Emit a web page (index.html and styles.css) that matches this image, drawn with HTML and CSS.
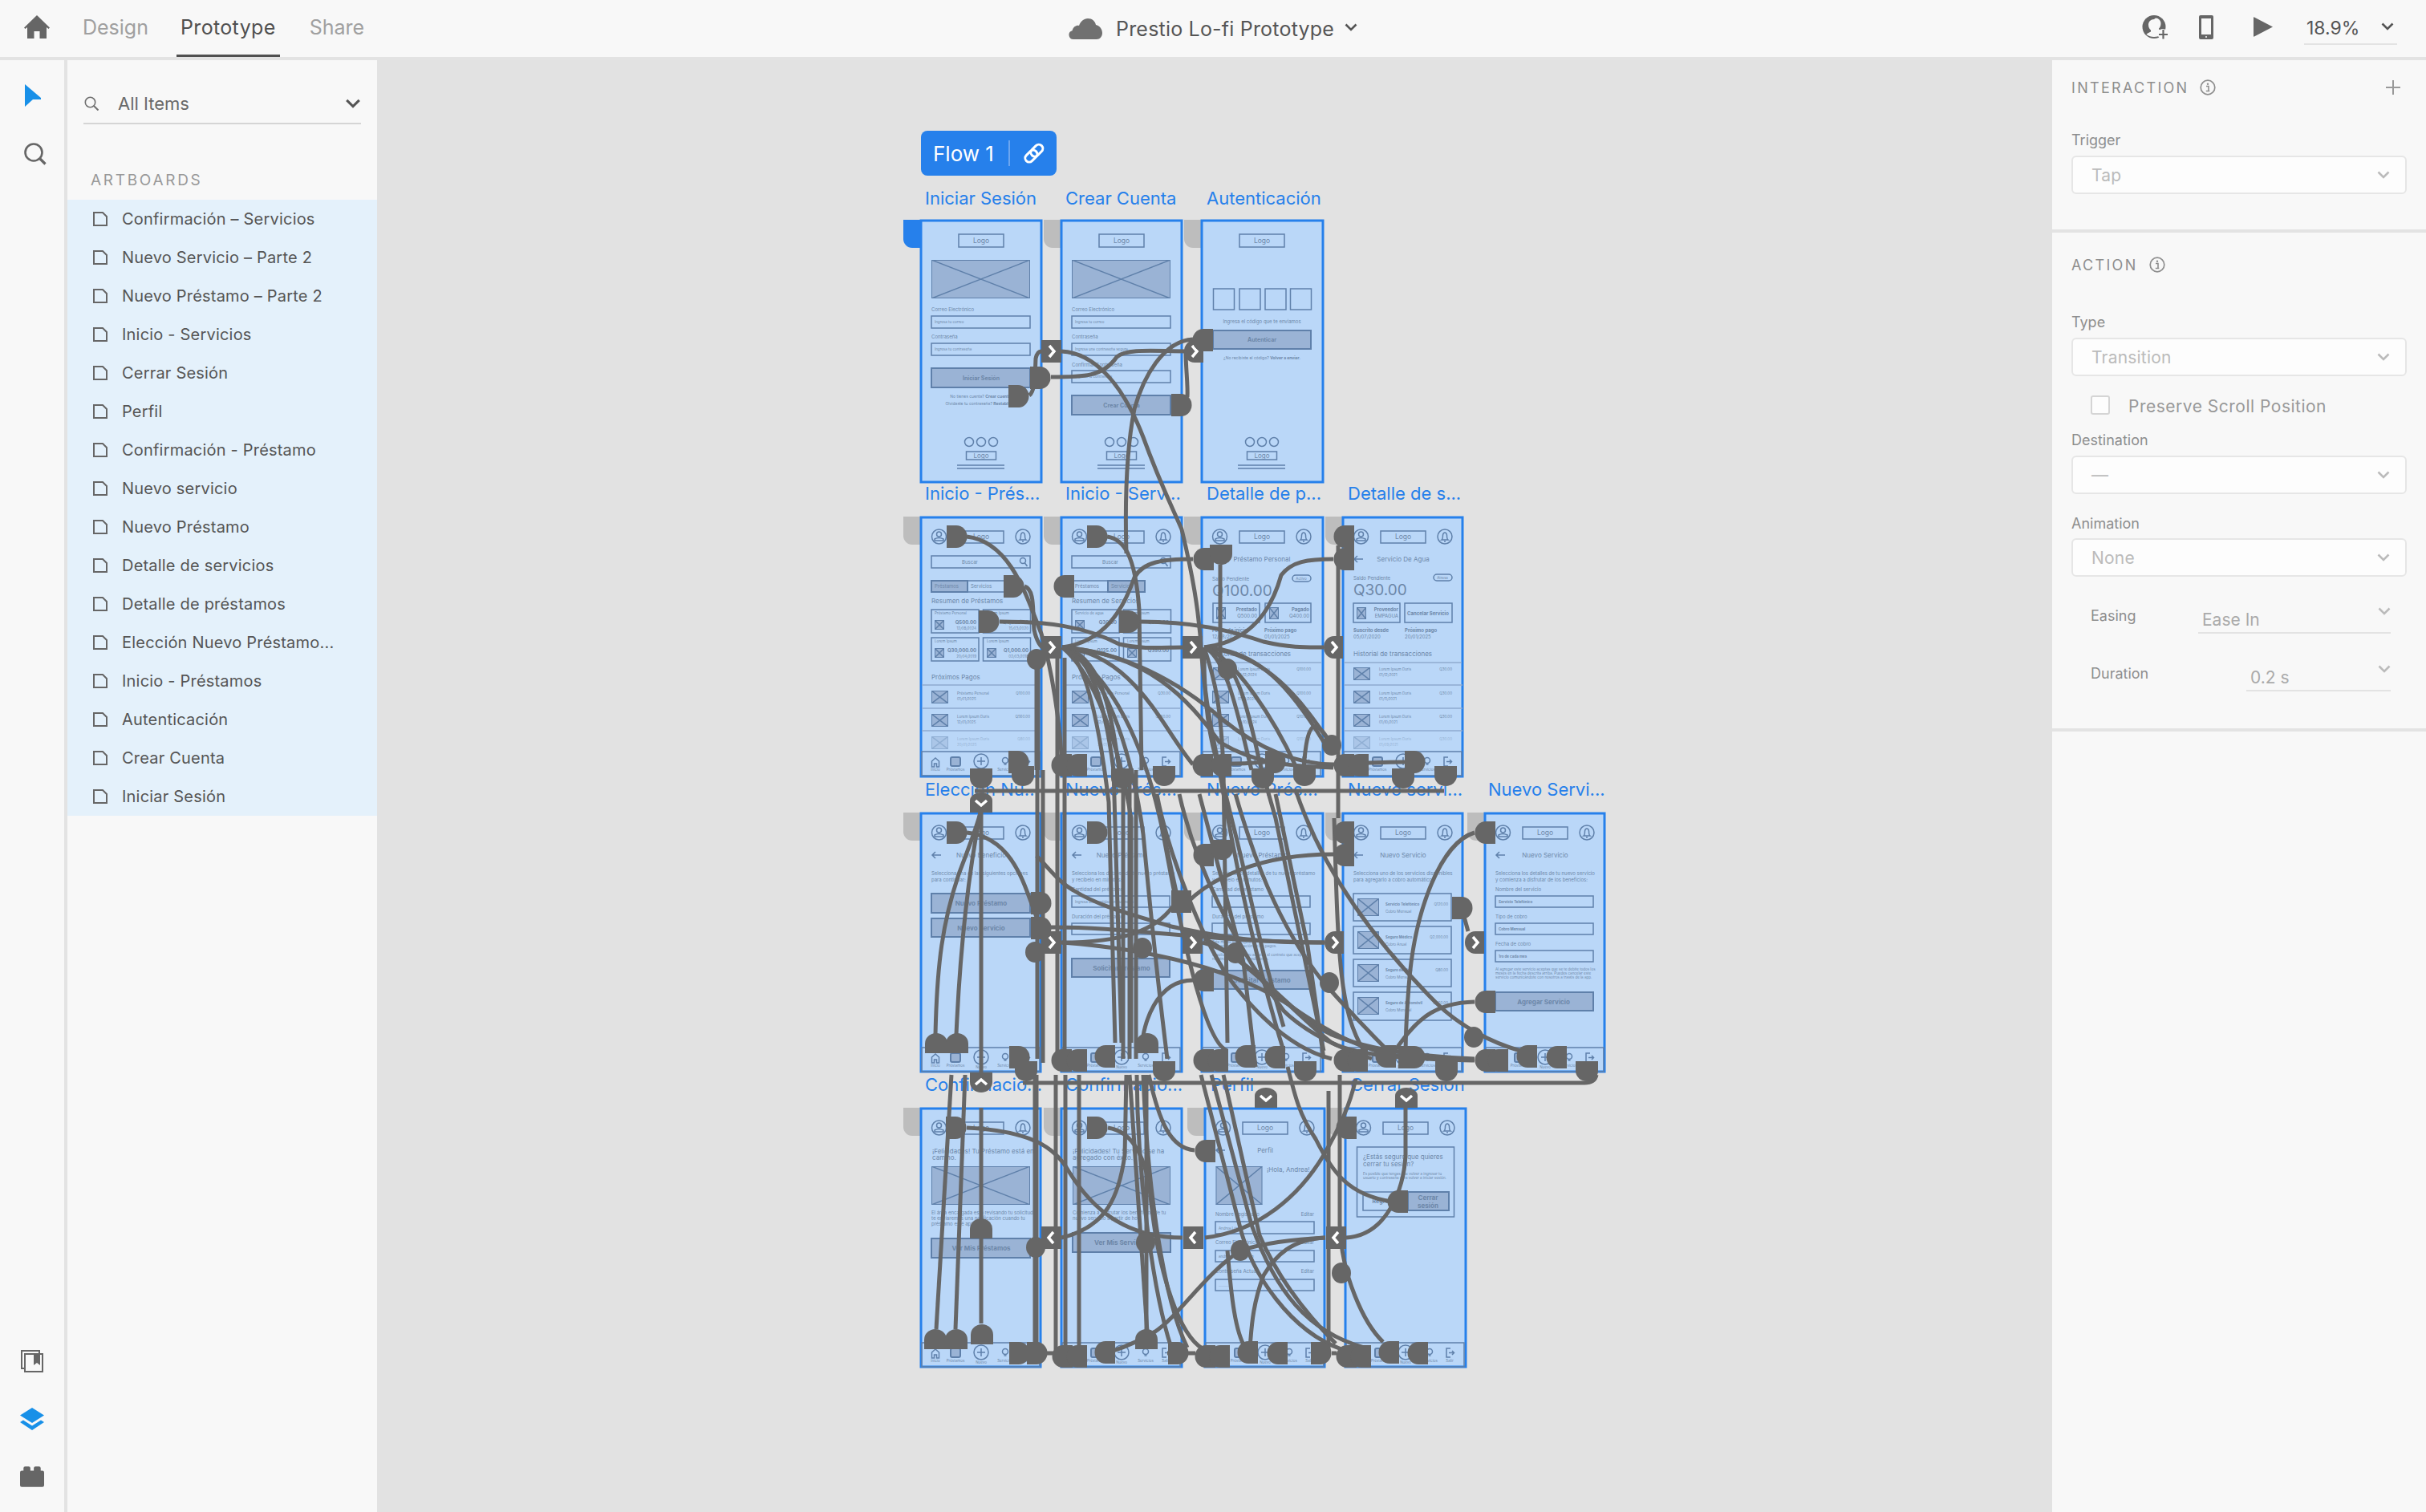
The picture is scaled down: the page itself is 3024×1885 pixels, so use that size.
FILE: index.html
```html
<!DOCTYPE html>
<html lang="en">
<head>
<meta charset="UTF-8">
<title>Prestio Lo-fi Prototype</title>
<link rel="stylesheet" href="styles.css">
</head>
<body>
<svg class="sprites" width="0" height="0">
  <symbol id="chev" viewBox="0 0 16 10"><path d="M1.500 1.500 8 8l6.500-6.500" fill="none" stroke="currentColor" stroke-width="2.600"/></symbol>
  <symbol id="info" viewBox="0 0 20 20"><circle cx="10" cy="10" r="8.800" fill="none" stroke="currentColor" stroke-width="1.700"/><circle cx="10" cy="5.800" r="1.200" fill="currentColor"/><path d="M8 8.500h3v6M7.800 14.500h4.500" fill="none" stroke="currentColor" stroke-width="1.600"/></symbol>
</svg>

<header class="topbar">
  <div class="topbar-left">
    <svg class="home" viewBox="0 0 32 29"><path d="M16 0 32 15.500l-1.500 1.500L28 15v14h-8.500v-9h-7v9H4V15l-2.500 2L0 15.500z" fill="#666"/></svg>
    <nav class="tabs">
      <a class="tab">Design</a>
      <a class="tab tab-on">Prototype</a>
      <a class="tab">Share</a>
    </nav>
  </div>
  <div class="doc-title">
    <svg class="cloud" viewBox="0 0 42 26"><path d="M6 26a5.500 5.500 0 0 1-1.500-10.800C6 10 10 8 13 9c2-5.500 6-9 11-9 5.500 0 9 3.500 10 8 4.500 1 8 5 8 10 0 4.500-3 8-7 8z" fill="#707070"/></svg>
    <span>Prestio Lo-fi Prototype</span>
    <svg class="chev-sm"><use href="#chev"/></svg>
  </div>
  <div class="topbar-right">
    <svg class="collab" viewBox="0 0 33 30"><circle cx="15" cy="14.500" r="14.500" fill="#666"/><path d="M15 5c-4 0-7 3-7 7 0 3 1.500 5.500 3 6.500v2c-2 .8-4 1.800-5.500 3.500 2.500 2 6 3 9.500 3 3 0 6-.8 8-2.500l2-5-4-2v-1c1.500-1 2.500-3.500 2.500-6.500 0-3.500-3-6.500-6.500-6.500z" fill="#f8f8f8"/><circle cx="26" cy="23.500" r="6.500" fill="#f8f8f8"/><path d="M26.500 18v11.500M21 24h11" stroke="#666" stroke-width="2.200" fill="none"/></svg>
    <svg class="phone" viewBox="0 0 18 30"><path d="M2 0h14a2 2 0 0 1 2 2v26a2 2 0 0 1-2 2H2a2 2 0 0 1-2-2V2a2 2 0 0 1 2-2zm1 4v20h12V4z" fill="#666" fill-rule="evenodd"/><circle cx="9" cy="27" r="1" fill="#f8f8f8"/></svg>
    <svg class="play" viewBox="0 0 24 25"><path d="M0 1q0-1 1-.500L24 12.500 1 24.500q-1 .500-1-.500z" fill="#666"/></svg>
    <div class="zoom-box"><span>18.9%</span><svg class="chev-sm"><use href="#chev"/></svg></div>
  </div>
</header>

<main class="workspace">
  <aside class="rail">
    <div class="rail-top">
      <svg class="rail-cursor" viewBox="0 0 20 28"><path d="M0 0 20 17v2H10L0 28z" fill="#1890e8"/></svg>
      <svg class="rail-search" viewBox="0 0 28 28"><circle cx="12" cy="12" r="10.500" fill="none" stroke="#666" stroke-width="2.600"/><path d="m19.500 19.500 7 7" stroke="#666" stroke-width="3.200"/></svg>
    </div>
    <div class="rail-bottom">
      <svg class="rail-icon" viewBox="0 0 28 28"><path d="M5 23H1V1h22v4" fill="none" stroke="#666" stroke-width="2"/><rect x="5" y="5" width="22" height="22" fill="none" stroke="#666" stroke-width="2"/><path d="M16 5h8v14l-4-3-4 3z" fill="#666"/></svg>
      <svg class="rail-icon" viewBox="0 0 30 28"><path d="M15 0 30 9.500 15 19 0 9.500z" fill="#1890e8"/><path d="m4 15.500 11 7 11-7 4 2.500-15 10L0 18z" fill="#1890e8"/></svg>
      <svg class="rail-icon" viewBox="0 0 28 24"><path d="M4 5V2q0-2 2-2h4q2 0 2 2v3h4V2q0-2 2-2h4q2 0 2 2v3h2q2 0 2 2v15q0 2-2 2H2q-2 0-2-2V7q0-2 2-2z" fill="#666"/></svg>
    </div>
  </aside>

  <aside class="layers">
    <div class="filter">
      <svg class="filter-search" viewBox="0 0 18 18"><circle cx="7.500" cy="7.500" r="6.200" fill="none" stroke="#707070" stroke-width="1.600"/><path d="m12 12 5.500 5.500" stroke="#707070" stroke-width="2"/></svg>
      <span>All Items</span>
      <svg class="filter-chev"><use href="#chev"/></svg>
    </div>
    <h2 class="layers-head">ARTBOARDS</h2>
    <ul class="layer-list">
      <li><svg class="file" viewBox="0 0 18 18"><path d="M1 1h11l5 5v11H1z" fill="none" stroke="#666" stroke-width="2"/></svg>Confirmación – Servicios</li>
      <li><svg class="file" viewBox="0 0 18 18"><path d="M1 1h11l5 5v11H1z" fill="none" stroke="#666" stroke-width="2"/></svg>Nuevo Servicio – Parte 2</li>
      <li><svg class="file" viewBox="0 0 18 18"><path d="M1 1h11l5 5v11H1z" fill="none" stroke="#666" stroke-width="2"/></svg>Nuevo Préstamo – Parte 2</li>
      <li><svg class="file" viewBox="0 0 18 18"><path d="M1 1h11l5 5v11H1z" fill="none" stroke="#666" stroke-width="2"/></svg>Inicio - Servicios</li>
      <li><svg class="file" viewBox="0 0 18 18"><path d="M1 1h11l5 5v11H1z" fill="none" stroke="#666" stroke-width="2"/></svg>Cerrar Sesión</li>
      <li><svg class="file" viewBox="0 0 18 18"><path d="M1 1h11l5 5v11H1z" fill="none" stroke="#666" stroke-width="2"/></svg>Perfil</li>
      <li><svg class="file" viewBox="0 0 18 18"><path d="M1 1h11l5 5v11H1z" fill="none" stroke="#666" stroke-width="2"/></svg>Confirmación - Préstamo</li>
      <li><svg class="file" viewBox="0 0 18 18"><path d="M1 1h11l5 5v11H1z" fill="none" stroke="#666" stroke-width="2"/></svg>Nuevo servicio</li>
      <li><svg class="file" viewBox="0 0 18 18"><path d="M1 1h11l5 5v11H1z" fill="none" stroke="#666" stroke-width="2"/></svg>Nuevo Préstamo</li>
      <li><svg class="file" viewBox="0 0 18 18"><path d="M1 1h11l5 5v11H1z" fill="none" stroke="#666" stroke-width="2"/></svg>Detalle de servicios</li>
      <li><svg class="file" viewBox="0 0 18 18"><path d="M1 1h11l5 5v11H1z" fill="none" stroke="#666" stroke-width="2"/></svg>Detalle de préstamos</li>
      <li><svg class="file" viewBox="0 0 18 18"><path d="M1 1h11l5 5v11H1z" fill="none" stroke="#666" stroke-width="2"/></svg>Elección Nuevo Préstamo...</li>
      <li><svg class="file" viewBox="0 0 18 18"><path d="M1 1h11l5 5v11H1z" fill="none" stroke="#666" stroke-width="2"/></svg>Inicio - Préstamos</li>
      <li><svg class="file" viewBox="0 0 18 18"><path d="M1 1h11l5 5v11H1z" fill="none" stroke="#666" stroke-width="2"/></svg>Autenticación</li>
      <li><svg class="file" viewBox="0 0 18 18"><path d="M1 1h11l5 5v11H1z" fill="none" stroke="#666" stroke-width="2"/></svg>Crear Cuenta</li>
      <li><svg class="file" viewBox="0 0 18 18"><path d="M1 1h11l5 5v11H1z" fill="none" stroke="#666" stroke-width="2"/></svg>Iniciar Sesión</li>
    </ul>
  </aside>

  <section class="canvas">
    <svg class="board" viewBox="470 75 2088 1810" width="2088" height="1810">
      <defs>
        <symbol id="ph" viewBox="0 0 100 100" preserveAspectRatio="none"><rect class="fl" width="100" height="100" vector-effect="non-scaling-stroke"/><path class="ln" d="M0 0 100 100M100 0 0 100" vector-effect="non-scaling-stroke"/></symbol>
        <path id="tab" d="M-21 0H0v35h-10a11 11 0 0 1-11-11z"/>
        <g id="hdr">
          <circle class="ln" cx="23.500" cy="25" r="9"/><circle class="ln" cx="23.500" cy="22" r="3"/><path class="ln" d="M18 30v-2q5-3 11 0v2z"/>
          <rect class="ln" x="48" y="18" width="56" height="15"/><text class="t9 c" x="76" y="28">Logo</text>
          <circle class="ln" cx="128" cy="25" r="9"/><path class="ln" d="M124 29q1.500-1 1.500-6 .5-3 2.500-3t2.500 3q0 5 1.500 6zM127 31h2"/>
        </g>
        <g id="nav">
          <rect class="ln" x="2" y="293" width="147" height="30"/>
          <path class="ln" d="M14.500 312v-7l4.500-4 4.500 4v7h-3v-4h-3v4z"/>
          <rect class="fl" x="38" y="300" width="12" height="11" rx="2"/>
          <circle class="ln" cx="76" cy="305" r="9"/><path class="ln" d="M76 300v10M71 305h10"/>
          <circle class="ln" cx="106" cy="304" r="3.500"/><path class="ln" d="M104.500 309h3"/>
          <path class="ln" d="M132 300h-5v11h5M130 305.500h6M134 303l2.500 2.500-2.500 2.500"/>
          <text class="t4 c" x="19" y="317">Inicio</text><text class="t4 c" x="44" y="317">Préstamos</text><text class="t4 c" x="76" y="319">Nuevo</text><text class="t4 c" x="106" y="317">Servicios</text><text class="t4 c" x="131" y="317">Salir</text>
        </g>
        <g id="foot">
          <circle class="ln" cx="61" cy="277" r="5.500"/><circle class="ln" cx="76" cy="277" r="5.500"/><circle class="ln" cx="91" cy="277" r="5.500"/>
          <rect class="ln" x="57.500" y="289" width="37" height="10"/><text class="t8 c" x="76" y="297">Logo</text>
          <path class="ln" d="M46 306h59M46 310h59"/>
        </g>
        <g id="pays">
          <path class="dv" d="M2 210h148M2 239h148M2 267h148"/>
          <use href="#ph" x="14" y="217" width="21" height="16"/>
          <use href="#ph" x="14" y="246" width="21" height="16"/>
          <use href="#ph" class="fade" x="14" y="274" width="21" height="16"/>
        </g>
        <g id="back"><path class="ln" d="M26 53H15M19 49l-4 4 4 4"/></g>
        <path id="dr" d="M0 0h12a13.500 14 0 0 1 0 28H0z"/>
        <path id="dl" d="M26 0H14a13.500 14 0 0 0 0 28h12z"/>
        <path id="dd" d="M0 0h28v12a14 13 0 0 1-28 0z"/>
        <path id="du" d="M0 25V13a14 13 0 0 1 28 0v12z"/>
        <g id="ar"><path d="M0 0h25v28H0z"/><path class="chv" d="m10 7 6 7-6 7"/></g>
        <g id="arl"><path d="M25 0v28H14a13 14 0 0 1-13-14A13 14 0 0 1 14 0z"/><path class="chv" d="m11 7 6 7-6 7"/></g>
        <g id="al"><path d="M0 0h25v28H0z"/><path class="chv" d="m15 7-6 7 6 7"/></g>
        <g id="ad"><path d="M0 25V10a14 10 0 0 1 28 0v15z"/><path class="chv" d="m7 10 7 6 7-6"/></g>
        <g id="au"><path d="M0 0h28v12a14 13 0 0 1-28 0z"/><path class="chv" d="m7 15 7-6 7 6"/></g>
      </defs>

      <!-- flow badge -->
      <rect x="1148" y="163" width="169" height="56" rx="8" fill="#2680eb"/>
      <text class="flow" x="1163" y="201">Flow 1</text>
      <path d="M1258 175v32" stroke="#6ba6f0" stroke-width="2"/>
      <g fill="none" stroke="#fff" stroke-width="3"><rect x="1277" y="190" width="17" height="10" rx="5" transform="rotate(-45 1285 195)"/><rect x="1284" y="183" width="17" height="10" rx="5" transform="rotate(-45 1292 188)"/></g>

      <!-- artboard names -->
      <g class="names">
        <text x="1153" y="255">Iniciar Sesión</text><text x="1328" y="255">Crear Cuenta</text><text x="1504" y="255">Autenticación</text>
        <text x="1153" y="623">Inicio - Prés...</text><text x="1328" y="623">Inicio - Serv...</text><text x="1504" y="623">Detalle de p...</text><text x="1680" y="623">Detalle de s...</text>
        <text x="1153" y="992">Elección Nu...</text><text x="1328" y="992">Nuevo Prés...</text><text x="1504" y="992">Nuevo Prés...</text><text x="1680" y="992">Nuevo servi...</text><text x="1855" y="992">Nuevo Servi...</text>
        <text x="1153" y="1360">Confirmacio...</text><text x="1328" y="1360">Confirmacio...</text><text x="1509" y="1360">Perfil</text><text x="1683" y="1360">Cerrar Sesión</text>
      </g>

      <!-- row 1 -->
      <g transform="translate(1147 274)">
        <use href="#tab" fill="#2680eb"/><rect class="ab" x="1" y="1" width="150" height="326"/>
        <rect class="ln" x="48" y="18" width="56" height="16"/><text class="t9 c" x="76" y="29">Logo</text>
        <use href="#ph" x="14" y="50" width="123" height="48"/>
        <text class="t6" x="14" y="114">Correo Electrónico</text><rect class="ln" x="14" y="120" width="123" height="15"/><text class="t4" x="18" y="129">Ingresa tu correo</text>
        <text class="t6" x="14" y="148">Contraseña</text><rect class="ln" x="14" y="154" width="123" height="15"/><text class="t4" x="18" y="163">Ingresa tu contraseña</text>
        <rect class="fl" x="14" y="185" width="123" height="24"/><text class="t7b c" x="76" y="200">Iniciar Sesión</text>
        <text class="t5 c" x="76" y="222">No tienes cuenta? <tspan class="b">Crear cuenta.</tspan></text>
        <text class="t5 c" x="76" y="231">Olvidaste tu contraseña? <tspan class="b">Restablecer</tspan></text>
        <use href="#foot"/>
      </g>
      <g transform="translate(1322 274)">
        <use href="#tab" fill="#bdbdbd"/><rect class="ab" x="1" y="1" width="150" height="326"/>
        <rect class="ln" x="48" y="18" width="56" height="16"/><text class="t9 c" x="76" y="29">Logo</text>
        <use href="#ph" x="14" y="50" width="123" height="48"/>
        <text class="t6" x="14" y="114">Correo Electrónico</text><rect class="ln" x="14" y="120" width="123" height="15"/><text class="t4" x="18" y="129">Ingresa tu correo</text>
        <text class="t6" x="14" y="148">Contraseña</text><rect class="ln" x="14" y="154" width="123" height="15"/><text class="t4" x="18" y="163">Ingresa una contraseña segura</text>
        <text class="t6" x="14" y="183">Confirmar Contraseña</text><rect class="ln" x="14" y="188" width="123" height="15"/><text class="t4" x="18" y="197">Ingresa tu contraseña</text>
        <rect class="fl" x="14" y="219" width="123" height="24"/><text class="t7b c" x="76" y="234">Crear Cuenta</text>
        <use href="#foot"/>
      </g>
      <g transform="translate(1497 274)">
        <use href="#tab" fill="#bdbdbd"/><rect class="ab" x="1" y="1" width="151" height="326"/>
        <rect class="ln" x="48" y="18" width="56" height="16"/><text class="t9 c" x="76" y="29">Logo</text>
        <rect class="ln" x="15.500" y="86" width="26" height="26"/><rect class="ln" x="48" y="86" width="26" height="26"/><rect class="ln" x="80" y="86" width="26" height="26"/><rect class="ln" x="111.500" y="86" width="26" height="26"/>
        <text class="t6 c" x="76" y="129">Ingresa el código que te enviamos</text>
        <rect class="fl" x="15" y="138" width="122" height="23"/><text class="t7b c" x="76" y="152">Autenticar</text>
        <text class="t5 c" x="76" y="174">¿No recibiste el código? <tspan class="b">Volver a enviar.</tspan></text>
        <use href="#foot"/>
      </g>

      <!-- row 2 -->
      <g transform="translate(1147 644)">
        <use href="#tab" fill="#bdbdbd"/><rect class="ab" x="1" y="1" width="150" height="323"/><use href="#hdr"/>
        <rect class="ln" x="14" y="49" width="123" height="15"/><text class="t6 c" x="62" y="59">Buscar</text><circle class="ln" cx="128" cy="55" r="3.500"/><path class="ln" d="m130.500 58 3 4"/>
        <rect class="fl" x="14" y="80" width="45" height="14"/><rect class="ln" x="59" y="80" width="46" height="14"/><text class="t6" x="18" y="89">Préstamos</text><text class="t6" x="63" y="89">Servicios</text>
        <text class="t8" x="14" y="108">Resumen de Préstamos</text>
        <rect class="ln" x="14" y="116" width="59" height="29"/><rect class="ln" x="78.500" y="116" width="59" height="29"/><rect class="ln" x="14" y="151" width="59" height="29"/><rect class="ln" x="78.500" y="151" width="59" height="29"/>
        <text class="t4" x="18" y="122">Préstamo Personal</text><text class="t4" x="83" y="122">Lorem Ipsum</text><text class="t4" x="18" y="157">Lorem Ipsum</text><text class="t4" x="83" y="157">Lorem Ipsum</text>
        <use href="#ph" x="18" y="129" width="12" height="12"/><use href="#ph" x="83" y="164" width="12" height="12"/><use href="#ph" x="18" y="164" width="12" height="12"/>
        <text class="t6b r" x="70" y="134">Q500.00</text><text class="t6b r" x="135" y="134">Q4,000.00</text><text class="t6b r" x="70" y="169">Q30,000.00</text><text class="t6b r" x="135" y="169">Q1,000.00</text>
        <text class="t4 r" x="70" y="141">12/08/2024</text><text class="t4 r" x="135" y="141">15/03/2020</text><text class="t4 r" x="70" y="176">20/04/2019</text><text class="t4 r" x="135" y="176">02/03/2018</text>
        <text class="t8" x="14" y="203">Próximos Pagos</text><use href="#pays"/>
        <text class="t4" x="46" y="222">Préstamo Personal</text><text class="t4" x="46" y="229">01/01/2025</text><text class="t4 r" x="137" y="222">Q100.00</text>
        <text class="t4" x="46" y="251">Lorem Ipsum Doris</text><text class="t4" x="46" y="258">12/01/2025</text><text class="t4 r" x="137" y="251">Q560.00</text>
        <text class="t4 fade" x="46" y="279">Lorem Ipsum Doris</text><text class="t4 fade" x="46" y="286">20/01/2025</text><text class="t4 r fade" x="137" y="279">Q80.00</text>
        <use href="#nav"/>
      </g>
      <g transform="translate(1322 644)">
        <use href="#tab" fill="#bdbdbd"/><rect class="ab" x="1" y="1" width="150" height="323"/><use href="#hdr"/>
        <rect class="ln" x="14" y="49" width="123" height="15"/><text class="t6 c" x="62" y="59">Buscar</text><circle class="ln" cx="128" cy="55" r="3.500"/><path class="ln" d="m130.500 58 3 4"/>
        <rect class="ln" x="14" y="80" width="45" height="14"/><rect class="fl" x="59" y="80" width="46" height="14"/><text class="t6" x="18" y="89">Préstamos</text><text class="t6" x="63" y="89">Servicios</text>
        <text class="t8" x="14" y="108">Resumen de Servicios</text>
        <rect class="ln" x="14" y="116" width="59" height="29"/><rect class="ln" x="78.500" y="116" width="59" height="29"/><rect class="ln" x="14" y="151" width="59" height="29"/><rect class="ln" x="78.500" y="151" width="59" height="29"/>
        <text class="t4" x="18" y="122">Servicio de agua</text><text class="t4" x="83" y="122">Lorem Ipsum</text><text class="t4" x="18" y="157">Lorem Ipsum</text><text class="t4" x="83" y="157">Lorem Ipsum</text>
        <use href="#ph" x="18" y="129" width="12" height="12"/><use href="#ph" x="18" y="164" width="12" height="12"/><use href="#ph" x="83" y="164" width="12" height="12"/>
        <text class="t6b r" x="70" y="134">Q30.00</text><text class="t6b r" x="135" y="134">Q500.00</text><text class="t6b r" x="70" y="169">Q125.00</text><text class="t6b r" x="135" y="169">Q350.00</text>
        <text class="t8" x="14" y="203">Próximos Pagos</text><use href="#pays"/>
        <text class="t4" x="46" y="222">Préstamo Personal</text><text class="t4 r" x="137" y="222">Q30.00</text>
        <text class="t4" x="46" y="251">Lorem Ipsum Doris</text><text class="t4" x="46" y="258">12/01/2025</text><text class="t4 r" x="137" y="251">Q500.00</text>
        <text class="t4 fade" x="46" y="279">Lorem Ipsum Doris</text><text class="t4 fade" x="46" y="286">20/01/2025</text>
        <use href="#nav"/>
      </g>
      <g transform="translate(1497 644)">
        <use href="#tab" fill="#bdbdbd"/><rect class="ab" x="1" y="1" width="151" height="323"/><use href="#hdr"/><use href="#back"/>
        <text class="t8 c" x="76" y="56">Préstamo Personal</text>
        <text class="t6" x="14" y="80">Saldo Pendiente</text><rect class="ln" x="114" y="73" width="23" height="8" rx="4"/><text class="t4 c" x="125" y="79">Activo</text>
        <text class="t20" x="14" y="99">Q100.00</text>
        <rect class="ln" x="15" y="108" width="58" height="24"/><rect class="ln" x="80" y="108" width="57" height="24"/>
        <use href="#ph" x="19" y="113" width="12" height="15"/><use href="#ph" x="85" y="113" width="12" height="15"/>
        <text class="t6b r" x="70" y="118">Prestado</text><text class="t6 r" x="70" y="126">Q500.00</text><text class="t6b r" x="135" y="118">Pagado</text><text class="t6 r" x="135" y="126">Q400.00</text>
        <text class="t6b" x="14" y="144">Fecha de inicio</text><text class="t6" x="14" y="152">12/08/2024</text><text class="t6b" x="79" y="144">Próximo pago</text><text class="t6" x="79" y="152">01/01/2025</text>
        <text class="t8" x="14" y="174">Historial de transacciones</text>
        <path class="dv" d="M2 182h148"/><use href="#ph" x="15" y="188" width="21" height="16"/>
        <text class="t4" x="46" y="192">Lorem Ipsum Doris</text><text class="t4" x="46" y="199">01/12/2024</text><text class="t4 r" x="137" y="192">Q100.00</text>
        <use href="#pays"/>
        <text class="t4" x="46" y="222">Lorem Ipsum Doris</text><text class="t4" x="46" y="229">01/11/2024</text><text class="t4 r" x="137" y="222">Q100.00</text>
        <text class="t4" x="46" y="251">Lorem Ipsum Doris</text><text class="t4" x="46" y="258">01/10/2024</text><text class="t4 r" x="137" y="251">Q100.00</text>
        <text class="t4 fade" x="46" y="279">Lorem Ipsum Doris</text><text class="t4 r fade" x="137" y="279">Q100.00</text>
        <use href="#nav"/>
      </g>
      <g transform="translate(1673 644)">
        <use href="#tab" fill="#bdbdbd"/><rect class="ab" x="1" y="1" width="149" height="323"/><use href="#hdr"/><use href="#back"/>
        <text class="t8 c" x="76" y="56">Servicio De Agua</text>
        <text class="t6" x="14" y="79">Saldo Pendiente</text><rect class="ln" x="114" y="72" width="23" height="8" rx="4"/><text class="t4 c" x="125" y="78">Atrasa</text>
        <text class="t20" x="14" y="98">Q30.00</text>
        <rect class="ln" x="14" y="108" width="58" height="24"/><rect class="ln" x="78" y="108" width="59" height="24"/>
        <use href="#ph" x="18" y="113" width="12" height="15"/>
        <text class="t6b r" x="70" y="118">Proveedor</text><text class="t6 r" x="70" y="126">EMPAGUA</text><text class="t6b c" x="107" y="123">Cancelar Servicio</text>
        <text class="t6b" x="14" y="144">Suscrito desde</text><text class="t6" x="14" y="152">05/07/2020</text><text class="t6b" x="78" y="144">Próximo pago</text><text class="t6" x="78" y="152">20/01/2025</text>
        <text class="t8" x="14" y="174">Historial de transacciones</text>
        <path class="dv" d="M2 182h147"/><use href="#ph" x="14" y="188" width="21" height="16"/>
        <text class="t4" x="46" y="192">Lorem Ipsum Doris</text><text class="t4" x="46" y="199">01/12/2021</text><text class="t4 r" x="137" y="192">Q30.00</text>
        <use href="#pays"/>
        <text class="t4" x="46" y="222">Lorem Ipsum Doris</text><text class="t4" x="46" y="229">01/11/2021</text><text class="t4 r" x="137" y="222">Q30.00</text>
        <text class="t4" x="46" y="251">Lorem Ipsum Doris</text><text class="t4" x="46" y="258">01/10/2021</text><text class="t4 r" x="137" y="251">Q30.00</text>
        <text class="t4 fade" x="46" y="279">Lorem Ipsum Doris</text><text class="t4 fade" x="46" y="286">01/09/2021</text><text class="t4 r fade" x="137" y="279">Q30.00</text>
        <use href="#nav"/>
      </g>

      <!-- row 3 -->
      <g transform="translate(1147 1013)">
        <use href="#tab" fill="#bdbdbd"/><rect class="ab" x="1" y="1" width="149" height="322"/><use href="#hdr"/><use href="#back"/>
        <text class="t8 c" x="76" y="56">Nuevo Beneficio</text>
        <text class="t6" x="14" y="78">Selecciona una de las siguientes opciones</text><text class="t6" x="14" y="86">para continuar:</text>
        <rect class="fl" x="14" y="101" width="123" height="24"/><text class="t8b c" x="76" y="116">Nuevo Préstamo</text>
        <rect class="fl" x="14" y="132" width="123" height="23"/><text class="t8b c" x="76" y="147">Nuevo Servicio</text>
        <use href="#nav"/>
      </g>
      <g transform="translate(1322 1013)">
        <use href="#tab" fill="#bdbdbd"/><rect class="ab" x="1" y="1" width="150" height="322"/><use href="#hdr"/><use href="#back"/>
        <text class="t8 c" x="76" y="56">Nuevo Préstamo</text>
        <text class="t6" x="14" y="78">Selecciona los detalles de tu nuevo préstamo</text><text class="t6" x="14" y="86">y recíbelo en minutos:</text>
        <text class="t6" x="14" y="98">Cantidad del préstamo</text><rect class="ln" x="14" y="104" width="122" height="14"/><text class="t4" x="18" y="113">Ingresa una cantidad en quetzales</text>
        <text class="t6" x="14" y="132">Duración del préstamo</text><rect class="ln" x="14" y="138" width="122" height="14"/>
        <rect class="fl" x="14" y="182" width="122" height="23"/><text class="t8b c" x="76" y="197">Solicitar Préstamo</text>
        <use href="#nav"/>
      </g>
      <g transform="translate(1497 1013)">
        <use href="#tab" fill="#bdbdbd"/><rect class="ab" x="1" y="1" width="151" height="322"/><use href="#hdr"/><use href="#back"/>
        <text class="t8 c" x="76" y="56">Nuevo Préstamo</text>
        <text class="t6" x="14" y="78">Selecciona los detalles de tu nuevo préstamo</text><text class="t6" x="14" y="86">y recíbelo en minutos:</text>
        <text class="t6" x="14" y="98">Cantidad del préstamo</text><rect class="ln" x="14" y="104" width="122" height="14"/>
        <text class="t6" x="14" y="132">Duración del préstamo</text><rect class="ln" x="14" y="138" width="122" height="14"/>
        <text class="t4" x="14" y="163">Este monto está sujeto a</text><text class="t4" x="14" y="168">aplicación y aprobación de los pagos.</text>
        <text class="t4" x="14" y="179">Al solicitar tu préstamo aceptas el contrato que aceptas</text><text class="t4" x="14" y="184">nuestros términos y condiciones.</text>
        <rect class="fl" x="14" y="197" width="122" height="23"/><text class="t8b c" x="76" y="212">Solicitar Préstamo</text>
        <use href="#nav"/>
      </g>
      <g transform="translate(1673 1013)">
        <use href="#tab" fill="#bdbdbd"/><rect class="ab" x="1" y="1" width="149" height="322"/><use href="#hdr"/><use href="#back"/>
        <text class="t8 c" x="76" y="56">Nuevo Servicio</text>
        <text class="t6" x="14" y="78">Selecciona uno de los servicios disponibles</text><text class="t6" x="14" y="86">para agregarlo a cobro automático:</text>
        <rect class="ln" x="14" y="101" width="122" height="34"/><rect class="ln" x="14" y="142" width="122" height="34"/><rect class="ln" x="14" y="183" width="122" height="34"/><rect class="ln" x="14" y="224" width="122" height="35"/>
        <use href="#ph" x="19" y="107" width="27" height="22"/><use href="#ph" x="19" y="148" width="27" height="22"/><use href="#ph" x="19" y="189" width="27" height="22"/><use href="#ph" x="19" y="230" width="27" height="22"/>
        <text class="t4b" x="54" y="116">Servicio Telefónico</text><text class="t4" x="54" y="125">Cobro Mensual</text><text class="t4 r" x="132" y="116">Q120.00</text>
        <text class="t4b" x="54" y="157">Seguro Médico</text><text class="t4" x="54" y="166">Cobro Anual</text><text class="t4 r" x="132" y="157">Q2,000.00</text>
        <text class="t4b" x="54" y="198">Seguro de Vida</text><text class="t4" x="54" y="207">Cobro Mensual</text><text class="t4 r" x="132" y="198">Q80.00</text>
        <text class="t4b" x="54" y="239">Seguro de Automóvil</text><text class="t4" x="54" y="248">Cobro Mensual</text><text class="t4 r" x="132" y="239">Q450.00</text>
        <use href="#nav"/>
      </g>
      <g transform="translate(1850 1013)">
        <use href="#tab" fill="#bdbdbd"/><rect class="ab" x="1" y="1" width="149" height="322"/><use href="#hdr"/><use href="#back"/>
        <text class="t8 c" x="76" y="56">Nuevo Servicio</text>
        <text class="t6" x="14" y="78">Selecciona los detalles de tu nuevo servicio</text><text class="t6" x="14" y="86">y comienza a disfrutar de los beneficios:</text>
        <text class="t6" x="14" y="98">Nombre del servicio</text><rect class="ln" x="14" y="104" width="122" height="14"/><text class="t4b" x="18" y="113">Servicio Telefónico</text>
        <text class="t6" x="14" y="132">Tipo de cobro</text><rect class="ln" x="14" y="138" width="122" height="14"/><text class="t4b" x="18" y="147">Cobro Mensual</text>
        <text class="t6" x="14" y="166">Fecha de cobro</text><rect class="ln" x="14" y="172" width="122" height="14"/><text class="t4b" x="18" y="181">1ro de cada mes</text>
        <text class="t4" x="14" y="197">Al agregar este servicio aceptas que se te debite todos los</text><text class="t4" x="14" y="202">meses en la fecha descrita arriba. Puedes cancelar este</text><text class="t4" x="14" y="207">servicio comunicándote con nosotros a través de la app.</text>
        <rect class="fl" x="14" y="224" width="122" height="23"/><text class="t8b c" x="74" y="239">Agregar Servicio</text>
        <use href="#nav"/>
      </g>

      <!-- row 4 -->
      <g transform="translate(1147 1381)">
        <use href="#tab" fill="#bdbdbd"/><rect class="ab" x="1" y="1" width="149" height="322"/><use href="#hdr"/>
        <text class="t8" x="15" y="57">¡Felicidades! Tu Préstamo está en</text><text class="t8" x="15" y="65">camino.</text>
        <use href="#ph" x="14" y="73" width="123" height="48"/>
        <text class="t6" x="14" y="133">El área encargada está revisando tu solicitud,</text><text class="t6" x="14" y="140">te enviaremos una notificación cuando tu</text><text class="t6" x="14" y="147">préstamo esté aprobado.</text>
        <rect class="fl" x="14" y="163" width="123" height="24"/><text class="t8b c" x="76" y="178">Ver Mis Préstamos</text>
        <use href="#nav"/>
      </g>
      <g transform="translate(1322 1381)">
        <use href="#tab" fill="#bdbdbd"/><rect class="ab" x="1" y="1" width="150" height="322"/><use href="#hdr"/>
        <text class="t8" x="15" y="57">¡Felicidades! Tu Servicio se ha</text><text class="t8" x="15" y="65">agregado con éxito.</text>
        <use href="#ph" x="15" y="73" width="122" height="48"/>
        <text class="t6" x="15" y="133">Comienza a disfrutar los beneficios de tu</text><text class="t6" x="15" y="140">nuevo servicio a partir de hoy.</text>
        <rect class="fl" x="15" y="156" width="122" height="24"/><text class="t8b c" x="76" y="171">Ver Mis Servicios</text>
        <use href="#nav"/>
      </g>
      <g transform="translate(1501 1381)">
        <use href="#tab" fill="#bdbdbd"/><rect class="ab" x="1" y="1" width="149" height="322"/><use href="#hdr"/><use href="#back"/>
        <text class="t8 c" x="76" y="56">Perfil</text>
        <use href="#ph" x="14.500" y="73" width="58" height="48"/>
        <text class="t8" x="78" y="80">¡Hola, Andrea!</text>
        <text class="t6" x="14" y="135">Nombre Registrado</text><text class="t6 r" x="137" y="135">Editar</text><rect class="ln" x="14" y="142" width="123" height="15"/><text class="t4" x="18" y="152">Andrea López</text>
        <text class="t6" x="14" y="170">Correo Electrónico</text><text class="t6 r" x="137" y="170">Editar</text><rect class="ln" x="14" y="178" width="123" height="14"/><text class="t4" x="18" y="187">andrea@correo.com</text>
        <text class="t6" x="14" y="206">Contraseña Actual</text><text class="t6 r" x="137" y="206">Editar</text><rect class="ln" x="14" y="214" width="123" height="14"/><text class="t4" x="18" y="223">............</text>
        <use href="#nav"/>
      </g>
      <g transform="translate(1676 1381)">
        <use href="#tab" fill="#bdbdbd"/><rect class="ab" x="1" y="1" width="150" height="322"/><use href="#hdr"/>
        <rect class="ln" x="15.500" y="49" width="121" height="87"/>
        <text class="t8" x="23" y="64">¿Estás seguro que quieres</text><text class="t8" x="23" y="73">cerrar tu sesión?</text>
        <text class="t4" x="23" y="84">Es posible que tengas que volver a ingresar tu</text><text class="t4" x="23" y="89">usuario y contraseña para volver a iniciar sesión.</text>
        <rect class="ln" x="23" y="105" width="53" height="23"/><text class="t7b c" x="50" y="119">Regresar</text>
        <rect class="fl" x="79" y="105" width="51" height="23"/><text class="t8b c" x="104" y="115">Cerrar</text><text class="t8b c" x="104" y="125">sesión</text>
        <use href="#nav"/>
      </g>

      <!-- connection wires -->
      <g class="wires">
        <path d="M1310 470C1350 470 1375 470 1392 445 1405 434 1440 438 1480 438"/>
        <path d="M1323 438C1365 440 1400 480 1425 545 1445 600 1460 630 1473 660 1485 710 1495 760 1498 820 1505 900 1520 960 1540 1040 1560 1120 1570 1180 1600 1280"/>
        <path d="M1487 423C1450 425 1425 470 1414 510 1404 560 1402 620 1404 690"/>
        <path d="M1283 493C1290 488 1290 470 1291 447 1292 442 1294 438 1298 438"/>
        <path d="M1480 495C1481 480 1478 460 1478 438"/>

        <path d="M1205 669C1260 675 1280 745 1298 790 1310 830 1322 900 1324 960"/>
        <path d="M1277 731C1290 735 1287 760 1289 785 1292 800 1298 807 1300 807"/>
        <path d="M1246 775C1304 775 1350 780 1395 803 1425 810 1450 807 1474 807"/>
        <path d="M1380 669C1400 672 1415 690 1420 760L1423 960"/>
        <path d="M1324 807C1377 800 1400 760 1414 720 1425 700 1450 697 1487 697"/>
        <path d="M1421 775C1487 775 1530 785 1575 800 1610 808 1630 807 1650 807"/>
        <path d="M1501 807C1560 800 1585 760 1597 717 1610 700 1630 697 1662 697"/>
        <path d="M1521 704V835"/>
        <path class="thick" d="M1293 822V960"/>
        <path d="M1668 680V1020"/>
        <path d="M1324 807C1370 815 1385 880 1395 960"/>
        <path d="M1324 807C1360 815 1378 880 1388 960L1398 1300"/>
        <path d="M1324 807C1352 815 1370 900 1382 1000L1390 1300"/>
        <path d="M1324 807C1414 815 1450 910 1487 953"/>
        <path d="M1324 807C1400 812 1470 850 1524 897 1570 935 1620 953 1662 953"/>
        <path d="M1324 807C1430 815 1480 870 1520 925 1560 950 1600 955 1662 957"/>
        <path d="M1324 807C1386 840 1428 930 1450 1040 1470 1150 1500 1300 1530 1310"/>
        <path d="M1324 807C1375 830 1410 930 1425 1040 1440 1200 1450 1280 1455 1320"/>
        <path d="M1324 807C1365 840 1395 930 1410 1020V1300"/>
        <path d="M1501 807C1579 815 1620 870 1660 929"/>
        <path d="M1501 807C1570 810 1610 860 1650 925"/>
        <path d="M1501 807C1540 815 1555 880 1570 950L1590 1020 1650 1310"/>
        <path d="M1501 807C1530 820 1545 900 1560 960"/>
        <path d="M1501 807C1515 850 1522 880 1525 960L1530 1300"/>
        <path d="M1501 807C1500 880 1510 930 1520 960 1535 1050 1560 1180 1600 1310"/>
        <path d="M1501 807C1540 820 1590 900 1615 955"/>
        <path d="M1487 953C1510 950 1520 955 1577 950"/>
        <path d="M1662 953C1690 952 1720 950 1751 950"/>
        <path d="M1661 930C1645 905 1630 880 1625 960"/>
        <path d="M1215 986H1800"/>
        <path d="M1223 990V1337"/>
        <path d="M1318 820V1320"/>
        <path d="M1327 820V1320"/>
        <path d="M1400 960V1320"/>

        <path d="M1205 1038C1270 1045 1280 1120 1295 1150 1310 1175 1320 1175 1323 1175"/>
        <path d="M1292 1067C1310 1085 1320 1100 1338 1110 1370 1130 1410 1140 1460 1155 1550 1175 1600 1175 1651 1175"/>
        <path d="M1309 1156C1400 1155 1520 1175 1651 1175"/>
        <path d="M1323 1175C1400 1175 1440 1160 1462 1130"/>
        <path d="M1480 1125C1510 1095 1570 1065 1662 1065"/>
        <path d="M1324 1175C1430 1183 1539 1207 1610 1255 1660 1290 1700 1310 1751 1318"/>
        <path d="M1499 1175C1560 1190 1600 1260 1660 1290 1710 1310 1780 1318 1838 1320"/>
        <path d="M1838 1038C1797 1050 1763 1133 1756 1230 1752 1280 1752 1310 1752 1320"/>
        <path d="M1838 1249C1780 1250 1760 1280 1735 1315"/>
        <path d="M1825 1143 1830 1161"/>
        <path d="M1487 1222C1440 1222 1425 1280 1424 1300"/>
        <path d="M1166 1290C1168 1200 1175 1150 1195 1090 1210 1050 1218 1030 1222 1013"/>
        <path d="M1192 1290C1196 1200 1205 1100 1222 1013"/>
        <path d="M1293 960V1320"/>
        <path d="M1300 960V1325"/>
        <path d="M1501 1170C1560 1200 1620 1270 1660 1300 1700 1320 1780 1320 1838 1322"/>
        <path d="M1663 1020C1668 1200 1670 1260 1700 1310"/>
        <path d="M1442 990C1455 1060 1500 1180 1540 1230 1580 1280 1620 1310 1660 1320"/>
        <path d="M1470 990C1490 1080 1540 1180 1600 1260 1630 1290 1680 1310 1710 1320"/>
        <path d="M1540 990C1560 1060 1590 1150 1650 1225 1690 1270 1720 1300 1735 1315"/>
        <path d="M1615 985C1650 1090 1720 1180 1790 1250 1820 1280 1860 1300 1895 1310"/>
        <path d="M1440 990 1470 1130"/>
        <path d="M1408 960V1320"/>
        <path d="M1416 960V1320"/>
        <path d="M1275 1350H1975Q1988 1350 1990 1340"/>
        <path d="M1495 990 1550 1200 1565 1330"/>
        <path d="M1590 990 1630 1180 1650 1320"/>

        <path d="M1205 1406C1285 1410 1315 1430 1332 1460 1360 1505 1400 1543 1474 1543"/>
        <path d="M1381 1406C1410 1410 1430 1440 1435 1500 1445 1590 1470 1665 1500 1682"/>
        <path d="M1323 1543C1380 1530 1395 1490 1402 1440L1404 1340"/>
        <path d="M1502 1543C1570 1535 1620 1490 1650 1440 1670 1405 1682 1380 1690 1345"/>
        <path d="M1652 1543C1610 1545 1575 1550 1546 1559 1500 1590 1470 1640 1440 1660 1420 1672 1400 1680 1385 1685"/>
        <path d="M1652 1543C1610 1545 1590 1565 1575 1590 1560 1630 1560 1660 1558 1680"/>
        <path d="M1678 1543C1730 1540 1750 1480 1752 1440V1360"/>
        <path d="M1735 1498C1680 1490 1660 1460 1640 1420 1620 1390 1615 1370 1605 1330"/>
        <path d="M1497 1340 1545 1527C1560 1590 1610 1660 1672 1682"/>
        <path d="M1510 1340 1560 1527C1590 1610 1630 1660 1700 1680"/>
        <path d="M1525 1340 1570 1540C1600 1610 1650 1660 1665 1675"/>
        <path d="M1670 1340V1527C1672 1590 1700 1650 1724 1673"/>
        <path d="M1656 1360V1690"/>
        <path d="M1167 1657 1186 1340"/>
        <path d="M1191 1657 1203 1340"/>
        <path d="M1223 1381V1650"/>
        <path class="thick" d="M1291 1340V1680"/>
        <path d="M1316 1340V1690"/>
        <path d="M1328 1340V1690"/>
        <path d="M1345 1340 1345 1680"/>
        <path d="M1408 1340 1430 1660"/>
        <path d="M1417 1340C1418 1480 1440 1620 1460 1680"/>
        <path d="M1425 1340C1430 1480 1450 1620 1480 1680"/>
        <path d="M1429 1340V1660"/>
        <path d="M1432 1340C1445 1400 1460 1432 1489 1434"/>
        <path d="M1530 1559C1535 1620 1540 1660 1552 1680"/>
        <path d="M1305 1687H1315M1455 1687H1490M1660 1687H1666"/>
      </g>

      <!-- wire handles -->
      <g class="handles">
        <use href="#dr" x="1284" y="457"/><use href="#dr" x="1257" y="480"/><use href="#ar" x="1298" y="424"/><use href="#arl" x="1475" y="424"/><use href="#dl" x="1486" y="410"/><use href="#dr" x="1460" y="491"/>

        <use href="#dr" x="1180" y="655"/><use href="#dr" x="1355" y="655"/><use href="#dl" x="1487" y="683"/><use href="#dd" x="1508" y="679"/><use href="#dl" x="1662" y="655"/><use href="#dl" x="1662" y="683"/>
        <use href="#dr" x="1251" y="717"/><use href="#dl" x="1313" y="717"/><use href="#dr" x="1220" y="761"/><use href="#dr" x="1395" y="761"/>
        <ellipse cx="1292" cy="822" rx="12" ry="13"/><ellipse cx="1530" cy="834" rx="12" ry="13"/><ellipse cx="1660" cy="929" rx="12" ry="13"/>
        <use href="#ar" x="1298" y="793"/><use href="#ar" x="1474" y="793"/><use href="#arl" x="1649" y="793"/>
        <use href="#dr" x="1257" y="936"/><use href="#dd" x="1261" y="955"/><use href="#dd" x="1209" y="958"/><use href="#dl" x="1310" y="940"/><use href="#dl" x="1329" y="940"/>
        <use href="#dd" x="1385" y="958"/><use href="#dd" x="1437" y="955"/><use href="#dl" x="1486" y="940"/><use href="#dl" x="1509" y="940"/><use href="#dr" x="1577" y="936"/><use href="#dd" x="1560" y="958"/><use href="#dd" x="1612" y="955"/>
        <use href="#dl" x="1662" y="940"/><use href="#dl" x="1680" y="940"/><use href="#dr" x="1751" y="936"/><use href="#dd" x="1735" y="958"/><use href="#dd" x="1788" y="955"/>
        <use href="#ad" x="1209" y="988"/>

        <use href="#dr" x="1180" y="1024"/><use href="#dr" x="1355" y="1024"/><use href="#dl" x="1487" y="1052"/><use href="#dd" x="1509" y="1047"/><use href="#dl" x="1662" y="1024"/><use href="#dl" x="1662" y="1052"/><use href="#dl" x="1838" y="1024"/>
        <use href="#dr" x="1285" y="1112"/><use href="#dr" x="1285" y="1143"/><rect x="1460" y="1110" width="25" height="28"/><use href="#dr" x="1810" y="1118"/>
        <ellipse cx="1290" cy="1187" rx="12" ry="13"/><ellipse cx="1424" cy="1182" rx="12" ry="13"/><ellipse cx="1540" cy="1188" rx="12" ry="13"/><ellipse cx="1657" cy="1225" rx="12" ry="13"/><ellipse cx="1837" cy="1293" rx="12" ry="13"/>
        <use href="#ar" x="1298" y="1161"/><use href="#ar" x="1474" y="1161"/><use href="#arl" x="1650" y="1161"/><use href="#arl" x="1825" y="1161"/>
        <use href="#dl" x="1487" y="1208"/><use href="#dl" x="1838" y="1235"/>
        <use href="#du" x="1153" y="1288"/><use href="#du" x="1179" y="1288"/><use href="#du" x="1416" y="1288"/>
        <use href="#dr" x="1258" y="1304"/><use href="#dd" x="1265" y="1323"/><use href="#dl" x="1310" y="1308"/><use href="#dl" x="1329" y="1308"/><use href="#dl" x="1364" y="1303"/><use href="#dd" x="1437" y="1323"/>
        <use href="#dl" x="1487" y="1308"/><use href="#dl" x="1505" y="1308"/><use href="#dl" x="1539" y="1303"/><use href="#dl" x="1576" y="1304"/><use href="#dd" x="1613" y="1323"/>
        <use href="#dl" x="1662" y="1308"/><use href="#dl" x="1679" y="1308"/><use href="#dl" x="1714" y="1303"/><use href="#dr" x="1751" y="1304"/><rect x="1743" y="1304" width="12" height="28"/><use href="#dd" x="1789" y="1323"/>
        <use href="#dl" x="1838" y="1308"/><use href="#dl" x="1854" y="1308"/><use href="#dl" x="1890" y="1303"/><use href="#dl" x="1927" y="1304"/><use href="#dd" x="1964" y="1323"/>
        <use href="#au" x="1209" y="1337"/><use href="#ad" x="1564" y="1356"/><use href="#ad" x="1739" y="1356"/>

        <use href="#dr" x="1179" y="1392"/><use href="#dr" x="1355" y="1392"/><use href="#dl" x="1489" y="1421"/><use href="#dl" x="1665" y="1392"/><use href="#dl" x="1729" y="1484"/>
        <use href="#du" x="1209" y="1519"/>
        <ellipse cx="1291" cy="1555" rx="12" ry="13"/><ellipse cx="1428" cy="1549" rx="12" ry="13"/><ellipse cx="1546" cy="1559" rx="12" ry="13"/><ellipse cx="1672" cy="1587" rx="12" ry="13"/>
        <use href="#al" x="1298" y="1529"/><use href="#al" x="1475" y="1529"/><use href="#al" x="1653" y="1529"/>
        <use href="#du" x="1152" y="1657"/><use href="#du" x="1178" y="1657"/><use href="#du" x="1210" y="1651"/><use href="#du" x="1415" y="1657"/>
        <use href="#dr" x="1258" y="1673"/><use href="#dr" x="1280" y="1673"/><use href="#dl" x="1311" y="1677"/><use href="#dl" x="1329" y="1677"/><use href="#dl" x="1364" y="1672"/><use href="#dr" x="1456" y="1673"/>
        <use href="#dl" x="1489" y="1677"/><use href="#dl" x="1507" y="1677"/><use href="#dl" x="1542" y="1672"/><use href="#dl" x="1579" y="1673"/><use href="#dr" x="1634" y="1673"/>
        <use href="#dl" x="1665" y="1677"/><use href="#dl" x="1683" y="1677"/><use href="#dl" x="1718" y="1672"/><use href="#dl" x="1754" y="1673"/>
      </g>
    </svg>
  </section>

  <aside class="props">
    <section class="prop-group group-interaction">
      <h3 class="prop-head">INTERACTION <svg class="info"><use href="#info"/></svg><span class="plus"></span></h3>
      <label class="prop-label label-trigger">Trigger</label>
      <div class="select">Tap<svg class="chev-dim"><use href="#chev"/></svg></div>
    </section>
    <section class="prop-group group-action">
      <h3 class="prop-head">ACTION <svg class="info"><use href="#info"/></svg></h3>
      <label class="prop-label label-type">Type</label>
      <div class="select">Transition<svg class="chev-dim"><use href="#chev"/></svg></div>
      <div class="check-row"><span class="check"></span>Preserve Scroll Position</div>
      <label class="prop-label label-dest">Destination</label>
      <div class="select">—<svg class="chev-dim"><use href="#chev"/></svg></div>
      <label class="prop-label label-anim">Animation</label>
      <div class="select">None<svg class="chev-dim"><use href="#chev"/></svg></div>
      <div class="inline-row row-easing">
        <span class="prop-label">Easing</span>
        <div class="inline-value value-easing">Ease In<svg class="chev-dim"><use href="#chev"/></svg></div>
      </div>
      <div class="inline-row row-duration">
        <span class="prop-label">Duration</span>
        <div class="inline-value value-duration">0.2 s<svg class="chev-dim"><use href="#chev"/></svg></div>
      </div>
    </section>
  </aside>
</main>
</body>
</html>
```

FILE: styles.css
```css
* {
    box-sizing: border-box;
}
body {
    margin: 0;
    width: 3024px;
    height: 1885px;
    overflow: hidden;
    display: flex;
    flex-direction: column;
    font-family: Inter, "Noto Sans", sans-serif;
    background: #e2e2e2;
    color: #555;
}
.sprites {
    position: absolute;
}

/* top bar */
.topbar {
    height: 75px;
    flex: none;
    display: flex;
    align-items: center;
    justify-content: space-between;
    position: relative;
    background: #f8f8f8;
    border-bottom: 4px solid #e3e3e3;
}
.topbar-left {
    display: flex;
    align-items: center;
    height: 100%;
    padding-left: 30px;
}
.home {
    width: 32px;
    height: 29px;
    margin-top: -4px;
}
.tabs {
    display: flex;
    height: 100%;
    margin-left: 36px;
    gap: 32px;
}
.tab {
    display: flex;
    align-items: center;
    padding: 0 5px;
    font-size: 25px;
    color: #a0a0a0;
    border-bottom: 3px solid transparent;
}
.tab-on {
    margin-left: -2px;
    letter-spacing: .35px;
    color: #505050;
    border-bottom-color: #505050;
}
.doc-title {
    position: absolute;
    left: 1332px;
    top: 0;
    height: 71px;
    display: flex;
    align-items: center;
    font-size: 25px;
    letter-spacing: .2px;
    color: #555;
}
.cloud {
    width: 42px;
    height: 26px;
    margin-right: 17px;
}
.chev-sm {
    width: 16px;
    height: 10px;
    color: #555;
    margin-left: 13px;
    margin-top: -4px;
}
.topbar-right {
    display: flex;
    align-items: center;
    height: 100%;
    padding-right: 36px;
}
.collab {
    width: 33px;
    height: 30px;
    margin-top: -4px;
}
.phone {
    width: 18px;
    height: 30px;
    margin: -4px 0 0 38px;
}
.play {
    width: 24px;
    height: 25px;
    margin: -4px 0 0 50px;
}
.zoom-box {
    display: flex;
    align-items: center;
    justify-content: space-between;
    width: 116px;
    height: 40px;
    margin: 0 0 0 39px;
    padding: 0 4px 0 3px;
    font-size: 23px;
    border-bottom: 2px solid #e3e3e3;
    position: relative;
    top: 0;
}

/* workspace */
.workspace {
    flex: 1;
    display: flex;
    min-height: 0;
}
.rail {
    width: 84px;
    flex: none;
    display: flex;
    flex-direction: column;
    justify-content: space-between;
    background: #f8f8f8;
    border-right: 4px solid #e3e3e3;
}
.rail-top {
    display: flex;
    flex-direction: column;
    padding: 30px 0 0 30px;
}
.rail-cursor {
    width: 20px;
    height: 28px;
    margin-left: 1px;
}
.rail-search {
    width: 28px;
    height: 28px;
    margin-top: 45px;
}
.rail-bottom {
    display: flex;
    flex-direction: column;
    align-items: center;
    gap: 44px;
    padding-bottom: 30px;
    padding-right: 0;
}
.rail-icon {
    width: 30px;
    height: 28px;
}
.layers {
    width: 386px;
    flex: none;
    background: #f8f8f8;
}
.filter {
    display: flex;
    align-items: center;
    height: 42px;
    margin: 38px 20px 0;
    padding: 0 0 8px 1px;
    font-size: 22px;
    color: #6a6a6a;
    border-bottom: 2px solid #d5d5d5;
}
.filter-search {
    width: 18px;
    height: 18px;
    margin-right: 24px;
}
.filter-chev {
    width: 20px;
    height: 12px;
    margin-left: auto;
    color: #555;
}
.layers-head {
    margin: 58px 0 12px 29px;
    font-size: 19px;
    line-height: 24px;
    font-weight: 400;
    letter-spacing: 2.7px;
    color: #999;
}
.layer-list {
    list-style: none;
    margin: 0;
    padding: 0;
    background: #e4f1fb;
}
.layer-list li {
    height: 48px;
    display: flex;
    align-items: center;
    padding-left: 32px;
    font-size: 20px;
    letter-spacing: .2px;
    color: #555;
}
.file {
    width: 18px;
    height: 18px;
    margin-right: 18px;
}

/* canvas */
.canvas {
    flex: 1;
    min-width: 0;
    overflow: hidden;
    background: #e2e2e2;
}
.board {
    display: block;
    font-family: Inter, "Noto Sans", sans-serif;
}
.flow {
    font-size: 26px;
    fill: #fff;
}
.names text {
    font-size: 22px;
    fill: #2680eb;
}
.ab {
    fill: #bad7f8;
    stroke: #2680eb;
    stroke-width: 3;
}
.ln {
    fill: none;
    stroke: #5f80aa;
    stroke-width: 1.5;
}
.dv {
    fill: none;
    stroke: #8fabcf;
    stroke-width: 1.500;
}
.fl {
    fill: #9ab3d5;
    stroke: #5f80aa;
    stroke-width: 2;
}
.t4, .t4b, .t5, .t6, .t6b, .t7b, .t8, .t8b, .t9, .t20 {
    fill: #6d87a8;
}
.t4 { font-size: 4.500px; }
.t4b { font-size: 4.500px; font-weight: 700; }
.t5 { font-size: 5px; }
.t6 { font-size: 6px; }
.t6b { font-size: 6px; font-weight: 700; }
.t7b { font-size: 7px; font-weight: 700; }
.t8 { font-size: 8px; }
.t8b { font-size: 8px; font-weight: 700; }
.t9 { font-size: 8.500px; }
.t20 { font-size: 19px; }
.b { font-weight: 700; }
.c { text-anchor: middle; }
.r { text-anchor: end; }
.fade { opacity: .45; }
.wires path {
    fill: none;
    stroke: #666;
    stroke-width: 5;
}
.wires .thick {
    stroke-width: 7;
}
.handles {
    fill: #666;
}
.chv {
    fill: none;
    stroke: #fff;
    stroke-width: 3.500;
}

/* right panel */
.props {
    width: 466px;
    flex: none;
    background: #f8f8f8;
}
.prop-group {
    padding: 0 24px;
    border-bottom: 4px solid #e3e3e3;
}
.group-interaction {
    height: 215px;
    padding-top: 22px;
}
.group-action {
    height: 622px;
    padding-top: 28px;
}
.prop-head {
    display: flex;
    align-items: center;
    margin: 0;
    height: 24px;
    font-size: 18px;
    font-weight: 400;
    letter-spacing: 2.300px;
    color: #8e8e8e;
}
.info {
    width: 20px;
    height: 20px;
    margin-left: 14px;
    color: #8e8e8e;
}
.plus {
    position: relative;
    width: 18px;
    height: 18px;
    margin-left: auto;
    margin-right: 8px;
    background:
        linear-gradient(#999, #999) center / 18px 2px no-repeat,
        linear-gradient(#999, #999) center / 2px 18px no-repeat;
}
.prop-label {
    display: block;
    font-size: 18px;
    line-height: 24px;
    color: #8e8e8e;
}
.label-trigger { margin-top: 42px; }
.label-type { margin-top: 48px; }
.label-dest { margin-top: 20px; }
.label-anim { margin-top: 25px; }
.select {
    display: flex;
    align-items: center;
    justify-content: space-between;
    height: 48px;
    margin-top: 7px;
    padding: 0 19px 0 23px;
    font-size: 21px;
    letter-spacing: .2px;
    color: #bbb;
    background: #fdfdfd;
    border: 2px solid #e6e6e6;
    border-radius: 6px;
}
.label-anim + .select { margin-top: 6px; }
.chev-dim {
    width: 16px;
    height: 10px;
    color: #bbb;
}
.check-row {
    display: flex;
    align-items: center;
    height: 24px;
    margin: 25px 0 0 24px;
    font-size: 21px;
    letter-spacing: .5px;
    color: #999;
}
.check {
    width: 24px;
    height: 24px;
    margin-right: 23px;
    background: #fdfdfd;
    border: 2px solid #d5d5d5;
    border-radius: 3px;
    position: relative;
    top: -1px;
}
.label-dest { margin-top: 19px; }
.inline-row {
    display: flex;
    justify-content: space-between;
    align-items: flex-start;
    height: 41px;
    padding: 0 20px 0 24px;
}
.inline-row .prop-label {
    margin-top: 7px;
}
.row-easing { margin-top: 30px; }
.row-duration { margin-top: 31px; }
.inline-value {
    display: flex;
    justify-content: space-between;
    height: 41px;
    padding: 11px 0 0 5px;
    font-size: 21px;
    color: #aaa;
    border-bottom: 2px solid #e3e3e3;
}
.inline-value .chev-dim {
    margin-top: -3px;
}
.value-easing { width: 240px; }
.value-duration { width: 180px; }
```
